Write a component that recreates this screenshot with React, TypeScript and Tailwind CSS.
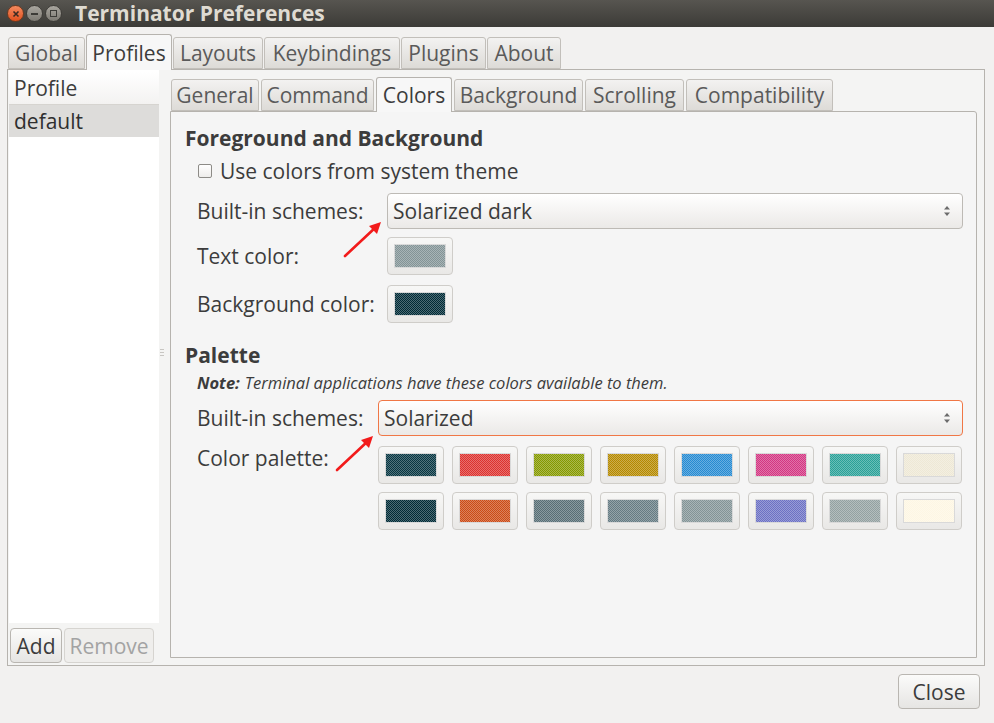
import React from "react";

const outerTabs = [
  { label: "Global", w: "w-[77px]" },
  { label: "Profiles", w: "w-[86px]", active: true },
  { label: "Layouts", w: "w-[90px]" },
  { label: "Keybindings", w: "w-[136px]" },
  { label: "Plugins", w: "w-[85px]" },
  { label: "About", w: "w-[74px]" },
];

const innerTabs = [
  { label: "General", w: "w-[88px]" },
  { label: "Command", w: "w-[113px]" },
  { label: "Colors", w: "w-[76px]", active: true },
  { label: "Background", w: "w-[129px]" },
  { label: "Scrolling", w: "w-[99px]" },
  { label: "Compatibility", w: "w-[147px]" },
];

const palette = [
  "bg-[#073642]",
  "bg-[#dc322f]",
  "bg-[#859900]",
  "bg-[#b58900]",
  "bg-[#268bd2]",
  "bg-[#d33682]",
  "bg-[#2aa198]",
  "bg-[#eee8d5]",
  "bg-[#002b36]",
  "bg-[#cb4b16]",
  "bg-[#586e75]",
  "bg-[#657b83]",
  "bg-[#839496]",
  "bg-[#6c71c4]",
  "bg-[#93a1a1]",
  "bg-[#fdf6e3]",
];

const Tab = ({ label, w, active, tall }: { label: string; w: string; active?: boolean; tall: string }) =>
  active ? (
    <div
      className={`${w} ${tall} relative z-10 -mb-px flex items-center justify-center rounded-t-[3px] border border-b-0 border-[#b6b3ae] bg-[#f7f7f7] text-[#3c3c3c]`}
    >
      {label}
    </div>
  ) : (
    <div
      className={`${w} h-[32px] flex items-center justify-center rounded-t-[3px] border border-[#c2bfba] bg-gradient-to-b from-[#f3f2f1] to-[#dddbd7] text-[#5a5a5a]`}
    >
      {label}
    </div>
  );

const Swatch = ({ color, w = "w-[66px]" }: { color: string; w?: string }) => (
  <div
    className={`${w} h-[38px] rounded-[4px] border border-[#cfcdc9] bg-gradient-to-b from-[#f7f7f6] to-[#e9e8e6] p-[6px] flex`}
  >
    <div className={`flex-1 border border-[#d9d9d9] ${color}`}>
      <div className="h-full w-full bg-[image:repeating-conic-gradient(rgba(255,255,255,0.3)_0_25%,transparent_0_50%)] bg-[length:2px_2px]" />
    </div>
  </div>
);

const Combo = ({ value, focus }: { value: string; focus?: boolean }) => (
  <div
    className={`flex-1 h-[36px] flex items-center justify-between rounded-[4px] border bg-gradient-to-b from-[#ffffff] to-[#ebe9e7] pl-[5px] pr-[11px] text-[#3c3c3c] ${
      focus ? "border-[#f07746]" : "border-[#bdbab5]"
    }`}
  >
    <span>{value}</span>
    <svg width="8" height="12" viewBox="0 0 8 12">
      <path d="M4 1 L7 4.5 L1 4.5 Z" fill="#6b6b6b" />
      <path d="M4 11 L7 7.5 L1 7.5 Z" fill="#6b6b6b" />
    </svg>
  </div>
);

const Arrow = ({ x1, y1, x2, y2 }: { x1: number; y1: number; x2: number; y2: number }) => (
  <svg className="absolute left-0 top-0 pointer-events-none" width="994" height="723">
    <line x1={x1} y1={y1} x2={x2 - 5} y2={y2 + 5} stroke="#f21b1b" strokeWidth="2.6" strokeLinecap="round" />
    <path
      d={`M${x2} ${y2} L${x2 - 12} ${y2 + 4} L${x2 - 4} ${y2 + 12} Z`}
      fill="#f21b1b"
    />
  </svg>
);

export default function App() {
  return (
    <div className="relative w-[994px] h-[723px] overflow-hidden bg-[#f2f1f0] flex flex-col font-['Open_Sans',sans-serif] text-[21px] leading-[28px] text-[#3c3c3c]">
      {/* title bar */}
      <div className="h-[27px] shrink-0 flex items-center bg-gradient-to-b from-[#575550] to-[#3c3b37] pl-[7px]">
        <div className="w-[17px] h-[17px] rounded-full bg-gradient-to-b from-[#f58a5e] to-[#df4f1a] border border-[#6e3a20] flex items-center justify-center">
          <svg width="8" height="8" viewBox="0 0 8 8">
            <path d="M1.5 1.5 L6.5 6.5 M6.5 1.5 L1.5 6.5" stroke="#3a2a22" strokeWidth="1.6" />
          </svg>
        </div>
        <div className="ml-[2px] w-[17px] h-[17px] rounded-full bg-gradient-to-b from-[#a9a69f] to-[#7d7a73] border border-[#3f3d39] flex items-center justify-center">
          <div className="w-[7px] h-[2px] bg-[#3c3b37]" />
        </div>
        <div className="ml-[2px] w-[17px] h-[17px] rounded-full bg-gradient-to-b from-[#a9a69f] to-[#7d7a73] border border-[#3f3d39] flex items-center justify-center">
          <div className="w-[7px] h-[7px] border-[1.5px] border-[#3c3b37]" />
        </div>
        <div className="ml-[13px] font-bold text-[21px] text-[#dfdbd2] leading-none">
          Terminator Preferences
        </div>
      </div>

      {/* body */}
      <div className="flex-1 flex flex-col pt-[8px] pl-[7px] pr-[9px] pb-[15px]">
        <div className="h-[34px] flex items-end gap-[1px] pl-px">
          {outerTabs.map((t) => (
            <Tab key={t.label} {...t} tall="h-[36px]" />
          ))}
        </div>
        <div className="h-[597px] border border-[#b6b3ae] bg-[#f4f4f3] flex">
          {/* left column */}
          <div className="w-[151px] flex flex-col pl-px">
            <div className="flex-1 bg-white">
              <div className="h-[33px] flex items-center pl-[5px] bg-gradient-to-b from-[#ffffff] to-[#f3f2f1] border-b border-[#d6d4d0] mt-[2px]">
                Profile
              </div>
              <div className="h-[32px] flex items-center pl-[5px] bg-[#dddcda] text-[#2f2f2f]">default</div>
            </div>
            <div className="h-[35px] mt-[5px] mb-[2px] flex gap-[2px] pl-px">
              <div className="w-[52px] flex items-center justify-center rounded-[4px] border border-[#b9b6b1] bg-gradient-to-b from-[#fbfbfa] to-[#e6e5e3]">
                Add
              </div>
              <div className="w-[90px] flex items-center justify-center rounded-[4px] border border-[#d6d4d0] bg-[#efeeec] text-[#a3a3a3]">
                Remove
              </div>
            </div>
          </div>

          {/* pane handle */}
          <div className="w-[11px] flex items-center pl-[1px]">
            <div className="flex flex-col gap-[2px] -mt-[30px]">
              <div className="w-[4px] h-px bg-[#c8c6c2]" />
              <div className="w-[4px] h-px bg-[#c8c6c2]" />
              <div className="w-[4px] h-px bg-[#c8c6c2]" />
            </div>
          </div>

          {/* inner notebook */}
          <div className="flex-1 flex flex-col mt-[9px] mr-[7px] mb-[7px]">
            <div className="h-[32px] flex items-end gap-[2px] pl-px">
              {innerTabs.map((t) => (
                <Tab key={t.label} {...t} tall="h-[35px]" />
              ))}
            </div>
            <div className="flex-1 border border-[#b6b3ae] rounded-tr-[3px] bg-[#f5f5f5] pt-[14px] pl-[14px] pr-[13px]">
              <div className="h-[24px] flex items-center font-bold">Foreground and Background</div>

              <div className="mt-[10px] h-[22px] flex items-center pl-[13px]">
                <div className="w-[14px] h-[14px] rounded-[2px] border border-[#8d8b87] bg-gradient-to-b from-white to-[#eeedeb]" />
                <span className="ml-[8px]">Use colors from system theme</span>
              </div>

              <div className="mt-[11px] flex items-center pl-[12px]">
                <div className="w-[190px]">Built-in schemes:</div>
                <Combo value="Solarized dark" />
              </div>

              <div className="mt-[8px] flex items-center pl-[12px]">
                <div className="w-[190px]">Text color:</div>
                <Swatch color="bg-[#839496]" w="w-[66px]" />
              </div>

              <div className="mt-[10px] flex items-center pl-[12px]">
                <div className="w-[190px]">Background color:</div>
                <Swatch color="bg-[#002b36]" w="w-[66px]" />
              </div>

              <div className="mt-[20px] h-[24px] flex items-center font-bold">Palette</div>

              <div className="mt-[7px] h-[18px] flex items-center pl-[12px] text-[16.5px] italic">
                <span className="font-bold mr-[5px]">Note:</span>
                Terminal applications have these colors available to them.
              </div>

              <div className="mt-[8px] flex items-center pl-[12px]">
                <div className="w-[181px]">Built-in schemes:</div>
                <Combo value="Solarized" focus />
              </div>

              <div className="mt-[10px] flex items-start pl-[12px]">
                <div className="w-[181px] leading-[24px]">Color palette:</div>
                <div className="grid grid-cols-8 gap-x-[8px] gap-y-[8px]">
                  {palette.map((c, i) => (
                    <Swatch key={i} color={c} />
                  ))}
                </div>
              </div>
            </div>
          </div>
        </div>

        <div className="mt-[8px] flex justify-end pr-[5px]">
          <div className="w-[82px] h-[35px] flex items-center justify-center rounded-[4px] border border-[#b9b6b1] bg-gradient-to-b from-[#fbfbfa] to-[#e6e5e3]">
            Close
          </div>
        </div>
      </div>

      {/* red annotation arrows */}
      <Arrow x1={345} y1={256} x2={381} y2={222} />
      <Arrow x1={337} y1={470} x2={373} y2={436} />
    </div>
  );
}
